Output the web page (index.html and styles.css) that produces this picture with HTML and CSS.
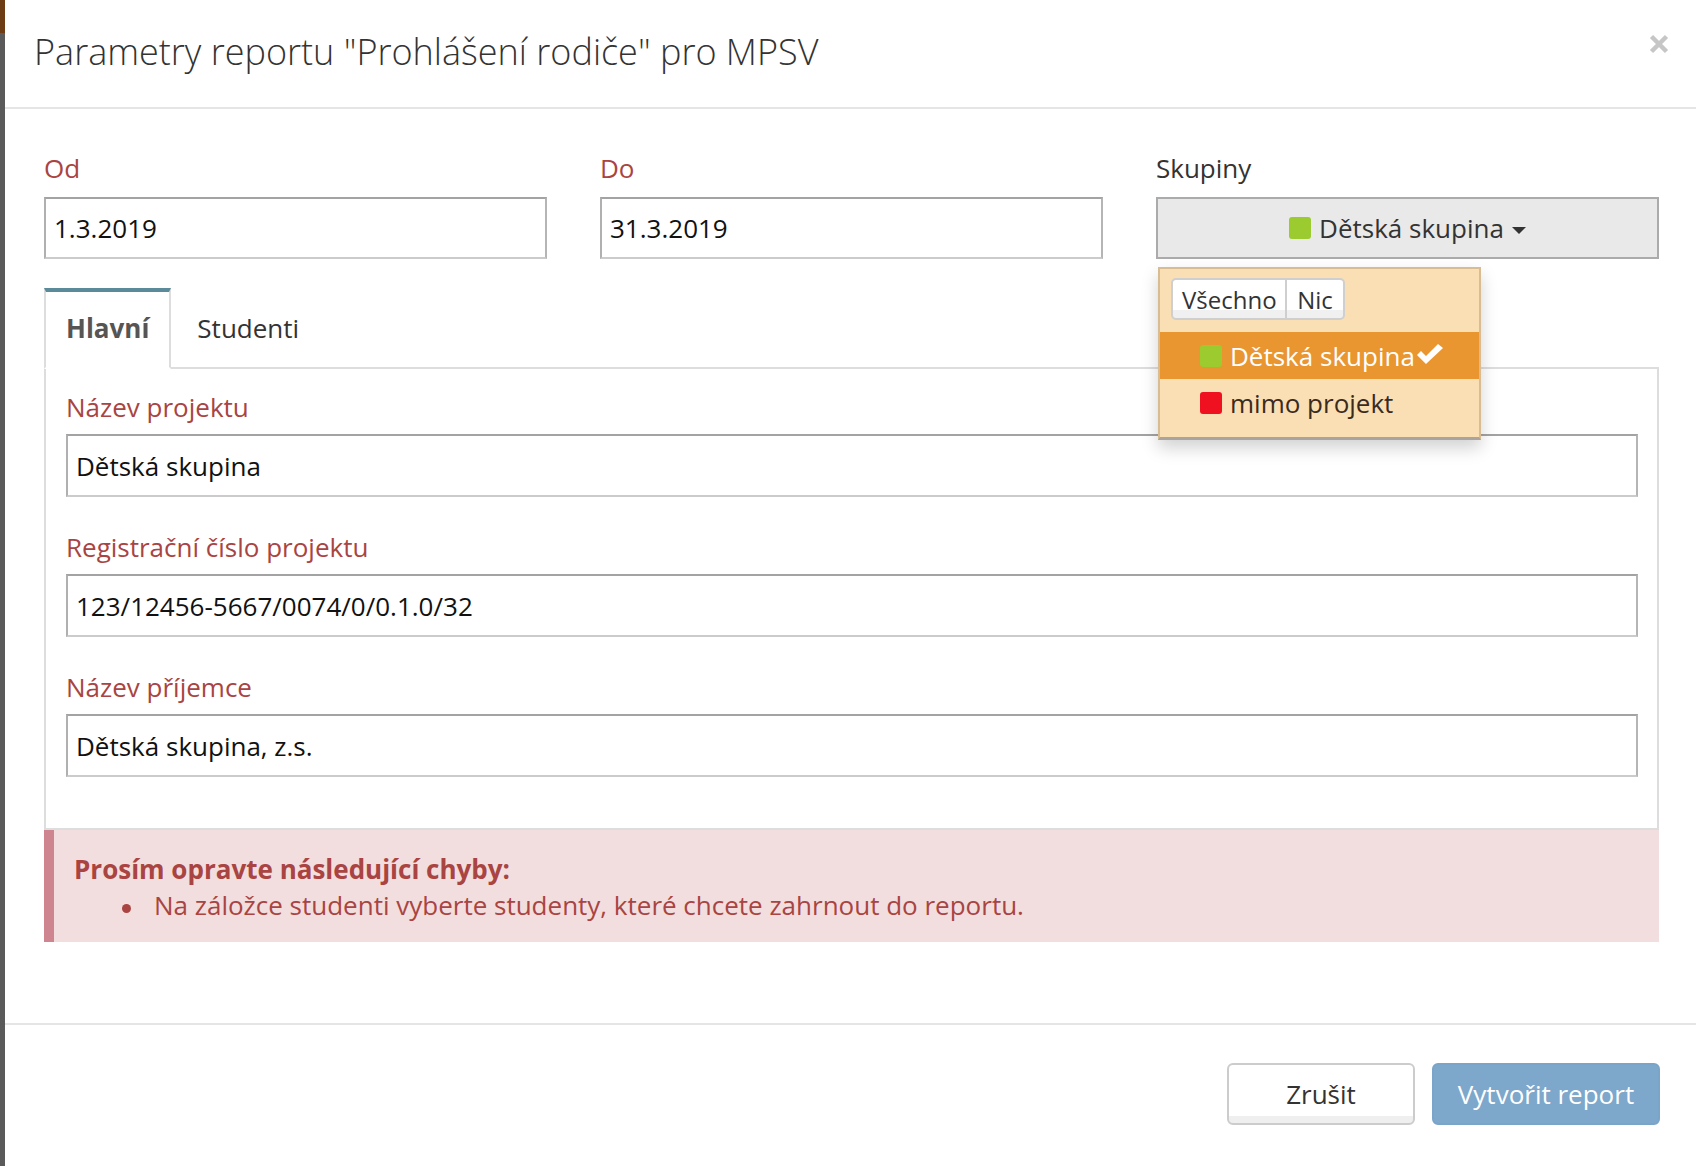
FILE: index.html
```html
<!DOCTYPE html>
<html lang="cs">
<head>
<meta charset="utf-8">
<title>Parametry reportu</title>
<link rel="stylesheet" href="styles.css">
</head>
<body>
<div class="strip"></div>
<div class="modal">
  <header class="modal-header">
    <h4 class="modal-title">Parametry reportu "Prohlášení rodiče" pro MPSV</h4>
    <button class="close" type="button" aria-label="Zavřít">
      <svg width="20" height="20" viewBox="0 0 20 20"><path d="M2.5 2.5 L17.5 17.5 M17.5 2.5 L2.5 17.5" stroke="#c6c6c6" stroke-width="4.5" stroke-linecap="butt"/></svg>
    </button>
  </header>
  <div class="modal-body">
    <div class="row3">
      <div class="field">
        <label class="lbl req">Od</label>
        <input class="ctl" type="text" value="1.3.2019">
      </div>
      <div class="field">
        <label class="lbl req">Do</label>
        <input class="ctl" type="text" value="31.3.2019">
      </div>
      <div class="field skup">
        <label class="lbl">Skupiny</label>
        <button class="ms-btn" type="button"><span class="sq green"></span><span class="ms-txt">Dětská skupina</span><span class="caret"></span></button>
        <div class="ms-menu">
          <div class="btn-group">
            <button class="gbtn" type="button">Všechno</button><button class="gbtn" type="button">Nic</button>
          </div>
          <div class="ms-item selected"><span class="sq green"></span><span>Dětská skupina</span><svg class="check" width="26" height="20" viewBox="0 0 26 20"><polygon points="0,11 4,7 9,12 21,0 26,4 9,20" fill="#fff"/></svg></div>
          <div class="ms-item"><span class="sq red"></span><span>mimo projekt</span></div>
        </div>
      </div>
    </div>

    <ul class="tabs">
      <li class="tab active">Hlavní</li>
      <li class="tab">Studenti</li>
    </ul>
    <div class="tab-pane">
      <div class="group">
        <label class="lbl req">Název projektu</label>
        <input class="ctl" type="text" value="Dětská skupina">
      </div>
      <div class="group">
        <label class="lbl req">Registrační číslo projektu</label>
        <input class="ctl" type="text" value="123/12456-5667/0074/0/0.1.0/32">
      </div>
      <div class="group last">
        <label class="lbl req">Název příjemce</label>
        <input class="ctl" type="text" value="Dětská skupina, z.s.">
      </div>
    </div>

    <div class="alert">
      <div class="alert-head">Prosím opravte následující chyby:</div>
      <ul class="alert-list">
        <li>Na záložce studenti vyberte studenty, které chcete zahrnout do reportu.</li>
      </ul>
    </div>
  </div>
  <footer class="modal-footer">
    <button class="btn btn-default" type="button">Zrušit</button>
    <button class="btn btn-primary" type="button" disabled>Vytvořit report</button>
  </footer>
</div>
</body>
</html>
```

FILE: styles.css
```css
* { box-sizing: border-box; }

html, body {
  margin: 0;
  height: 100%;
}

body {
  display: flex;
  font-family: "Open Sans", "Noto Sans", sans-serif;
  font-size: 26px;
  line-height: 36px;
  color: #333;
  background: #5a5a5a;
  overflow: hidden;
}

.strip {
  width: 5px;
  flex: none;
  background: linear-gradient(#6e3c14 0, #6e3c14 33px, #5a5a5a 33px);
}

.modal {
  flex: 1;
  background: #fff;
  display: flex;
  flex-direction: column;
  min-height: 100%;
}

/* header */
.modal-header {
  height: 109px;
  padding: 28px 27px 0 29px;
  border-bottom: 2px solid #e5e5e5;
  display: flex;
  justify-content: space-between;
  align-items: flex-start;
}

.modal-title {
  margin: 0;
  font-size: 36px;
  line-height: 48px;
  font-weight: 300;
  color: #333;
}

.close {
  border: 0;
  background: none;
  padding: 0;
  margin-top: 6px;
  width: 20px;
  height: 20px;
  cursor: pointer;
}
.close svg { display: block; }

/* body */
.modal-body {
  padding: 41px 37px 81px 39px;
}

.row3 {
  display: grid;
  grid-template-columns: 1fr 1fr 1fr;
  column-gap: 53px;
}

.field {
  display: flex;
  flex-direction: column;
}

.lbl {
  display: block;
  font-weight: 400;
  margin-bottom: 11px;
  color: #333;
}
.lbl.req { color: #a94442; }

.ctl {
  display: block;
  width: 100%;
  height: 62px;
  padding: 0 8px;
  font-family: inherit;
  font-size: 26px;
  color: #111;
  background: #fff;
  border: 2px solid;
  border-color: #a3a3a3 #b5b5b5 #cbcbcb #b0b0b0;
  border-radius: 0;
  outline: none;
}

/* multiselect */
.skup { position: relative; }

.ms-btn {
  height: 62px;
  width: 100%;
  border: 2px solid #ababab;
  background: #e9e9e9;
  font-family: inherit;
  font-size: 26px;
  color: #333;
  display: flex;
  align-items: center;
  justify-content: center;
  padding: 0;
}

.sq {
  display: inline-block;
  width: 22px;
  height: 22px;
  border-radius: 3px;
  flex: none;
}
.sq.green { background: #9bcb2e; }
.sq.red { background: #ef111f; }

.ms-btn .sq { margin-right: 8px; }
.ms-txt { line-height: 36px; }

.caret {
  display: inline-block;
  width: 0;
  height: 0;
  margin-left: 8px;
  margin-top: 5px;
  border-top: 7px solid #333;
  border-left: 7px solid transparent;
  border-right: 7px solid transparent;
}

.ms-menu {
  position: absolute;
  left: 2px;
  top: 117px;
  width: 323px;
  background: #fadeb4;
  border: 2px solid #d8bd94;
  border-bottom: 3px solid #a9a59d;
  padding: 9px 0 11px;
  box-shadow: 0 8px 16px rgba(0, 0, 0, 0.18);
  z-index: 5;
}

.btn-group {
  display: flex;
  margin-left: 11px;
  margin-bottom: 12px;
}

.gbtn {
  height: 42px;
  padding: 0 9px;
  font-family: inherit;
  font-size: 24px;
  color: #333;
  border: 2px solid #cfcfcf;
  background: linear-gradient(#fff 0, #fff 80%, #f0f0f0 80%);
}
.gbtn:first-child { border-radius: 5px 0 0 5px; width: 116px; }
.gbtn + .gbtn { margin-left: -2px; border-radius: 0 5px 5px 0; width: 60px; }

.ms-item {
  height: 47px;
  padding-left: 40px;
  display: flex;
  align-items: center;
  color: #3a2b1e;
}
.ms-item .sq { margin-right: 8px; }
.ms-item.selected {
  background: #e99530;
  color: #fff;
}
.check { display: block; margin-left: 2px; margin-top: -3px; }

/* tabs */
.tabs {
  list-style: none;
  margin: 29px 0 0;
  padding: 0;
  display: flex;
  border-bottom: 2px solid #dddddd;
}

.tab {
  padding: 18px 20px 21px;
  border: 2px solid transparent;
  border-top-width: 4px;
  margin-bottom: -2px;
  margin-right: 4px;
  color: #333;
}
.tab.active {
  font-weight: 700;
  color: #555;
  background: #fff;
  border-color: #5b8a9b #dddddd #fff #dddddd;
}

.tab-pane {
  border: 2px solid #dddddd;
  border-top: 0;
  padding: 20px 19px 51px 20px;
}

.group { margin-bottom: 32px; }
.group.last { margin-bottom: 0; }
.group .lbl { margin-bottom: 9px; }
.group .ctl { height: 63px; padding-left: 8px; }

/* alert */
.alert {
  background: #f2dede;
  border-left: 10px solid #cf8590;
  color: #a94442;
  padding: 21px 20px 19px 20px;
}
.alert-head { font-weight: 700; }
.alert-list {
  margin: 0;
  padding-left: 80px;
  list-style: none;
}
.alert-list li::before {
  content: "";
  display: inline-block;
  width: 9px;
  height: 9px;
  border-radius: 50%;
  background: currentColor;
  margin-left: -32px;
  margin-right: 23px;
  vertical-align: middle;
}

/* footer */
.modal-footer {
  border-top: 2px solid #e5e5e5;
  padding: 38px 36px 38px;
  display: flex;
  justify-content: flex-end;
  gap: 17px;
}

.btn {
  height: 62px;
  font-family: inherit;
  font-size: 26px;
  border-radius: 6px;
  border: 2px solid;
  padding: 0 22px;
  white-space: nowrap;
}
.btn-default {
  min-width: 188px;
  color: #333;
  border-color: #cccccc;
  background: linear-gradient(#fff 0, #fff 88%, #efefef 88%);
}
.btn-primary {
  min-width: 228px;
  color: #fff;
  background: #7da7cb;
  border-color: #7aa4c8;
}
```
